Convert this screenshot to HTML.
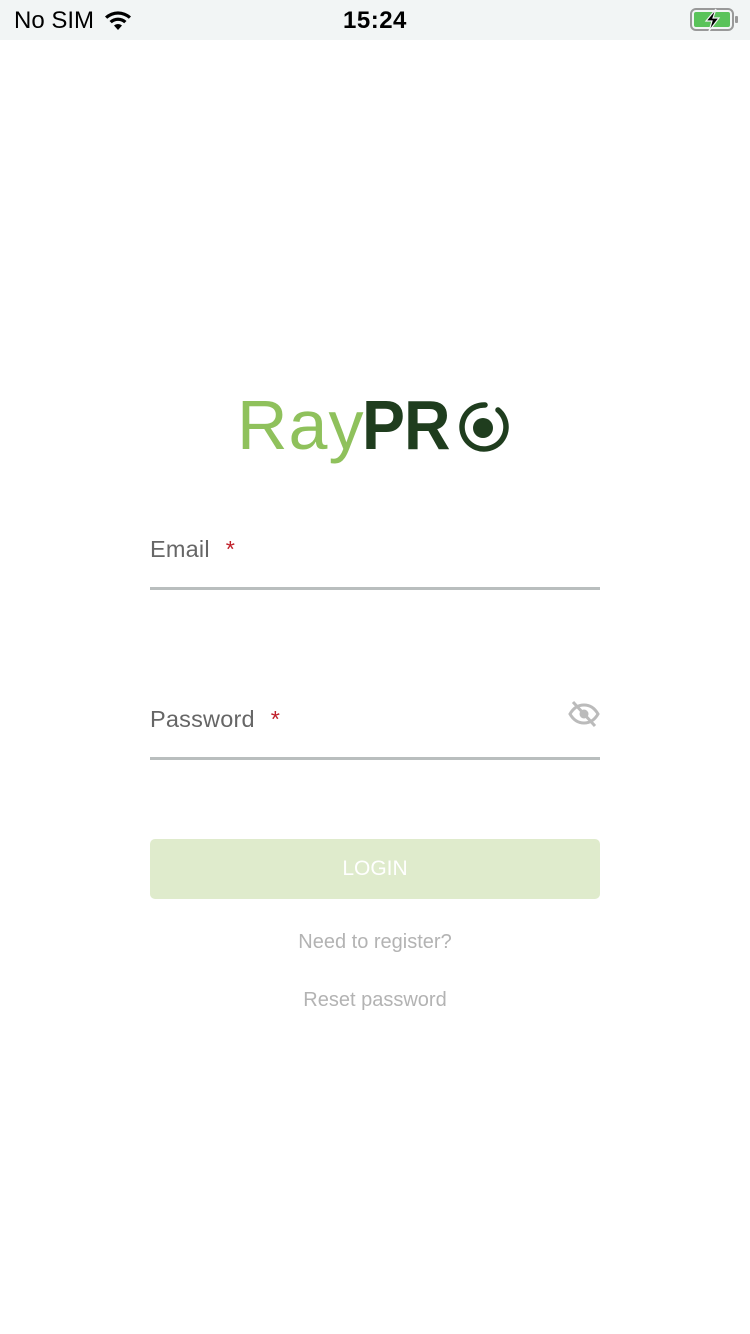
<!DOCTYPE html>
<html><head><meta charset="utf-8"><style>
*{margin:0;padding:0;box-sizing:border-box}
body{width:750px;height:1334px;background:#fff;font-family:"Liberation Sans",sans-serif;position:relative;overflow:hidden}
.sb{position:absolute;top:0;left:0;width:750px;height:40px;background:#f2f5f5}
.t{position:absolute;font-size:24px;color:#000}
.lbl{position:absolute;left:150px;font-size:23.5px;color:#666;letter-spacing:0.2px}
.lbl span{color:#c0202a;margin-left:16px}
.line{position:absolute;left:150px;width:450px;height:3px;background:#b9bebe}
.btn{position:absolute;left:150px;top:839px;width:450px;height:60px;background:#dfebcc;border-radius:5px;color:#fff;font-size:21px;text-align:center;line-height:60px}
.lk{position:absolute;width:750px;text-align:center;font-size:20px;color:#b3b3b3}
</style></head><body>
<div class="sb">
<div class="t" style="left:14px;top:7px">No SIM</div>
<svg style="position:absolute;left:103px;top:9px" width="30" height="22" viewBox="0 0 30 22"><path d="M2 7.5a19 19 0 0 1 26 0l-2.2 2.3a16 16 0 0 0-21.6 0z M6.5 12a12.5 12.5 0 0 1 17 0l-2.3 2.3a9 9 0 0 0-12.4 0z M11 16.5a6 6 0 0 1 8 0L15 21z" fill="#000"/></svg>
<div class="t" style="left:343px;top:7px;font-weight:bold;letter-spacing:0.5px">15:24</div>
<svg style="position:absolute;left:690px;top:8px" width="50" height="24" viewBox="0 0 50 24"><rect x="1" y="1" width="42" height="21" rx="5" fill="none" stroke="#999" stroke-width="2"/><rect x="4" y="4" width="36" height="15" rx="2" fill="#5ac35a"/><rect x="45" y="8" width="3" height="7" rx="1" fill="#999"/><path d="M26 1l-10 12h6l-3 10 10-13h-6z" fill="#000" stroke="#f2f5f5" stroke-width="1.2"/></svg>
</div>
<div style="position:absolute;left:237px;top:385px;font-size:70px;font-weight:300;color:#8fc15c;letter-spacing:1px">Ray</div>
<div style="position:absolute;left:362px;top:385px;font-size:70px;font-weight:bold;color:#1f3d1e;letter-spacing:-1px;transform:scaleX(0.92);transform-origin:left">PR</div>
<svg style="position:absolute;left:457px;top:400px" width="54" height="54" viewBox="0 0 54 54"><path d="M41 10A22 22 0 1 1 28 5" fill="none" stroke="#1f3d1e" stroke-width="5.5" stroke-linecap="round"/><circle cx="26" cy="28" r="10" fill="#1f3d1e"/></svg>
<div class="lbl" style="top:536px">Email<span>*</span></div>
<div class="line" style="top:587px"></div>
<div class="lbl" style="top:706px">Password<span>*</span></div>
<svg style="position:absolute;left:568px;top:700px" width="32" height="28" viewBox="0 0 32 28"><path d="M2 14c4-7 9-9 14-9s10 2 14 9c-4 7-9 9-14 9S6 21 2 14z" fill="none" stroke="#bbb" stroke-width="3"/><circle cx="16" cy="14" r="4.5" fill="#bbb"/><path d="M5 2l22 24" stroke="#bbb" stroke-width="3"/></svg>
<div class="line" style="top:757px"></div>
<div class="btn">LOGIN</div>
<div class="lk" style="top:931px">Need to register?</div>
<div class="lk" style="top:989px">Reset password</div>
</body></html>
